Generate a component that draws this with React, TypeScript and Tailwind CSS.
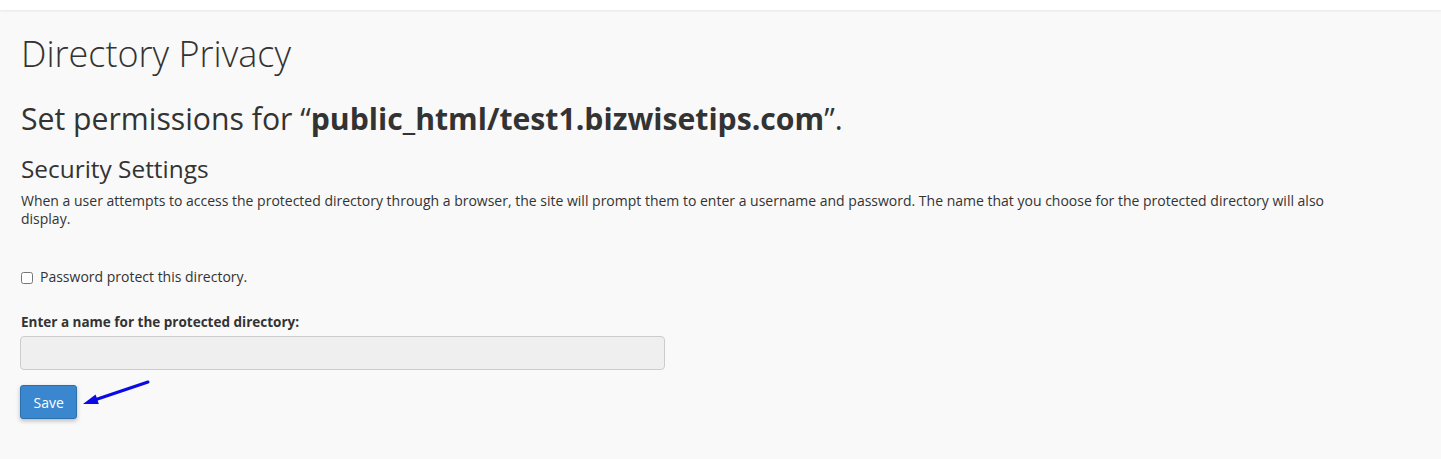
export default function App() {
  return (
    <div
      className="min-h-[459px] bg-[#f9f9f9] text-[#333]"
      style={{ fontFamily: '"Open Sans", sans-serif' }}
    >
      <div className="h-[10px] bg-white shadow-[0_1px_3px_rgba(0,0,0,0.08)]" />
      <div className="px-[21px]">
        <h1 className="mt-[24px] text-[36px] font-light leading-[40px]">Directory Privacy</h1>
        <h2 className="mt-[27px] text-[30.2px] leading-[36px]">
          Set permissions for “<b>public_html/test1.bizwisetips.com</b>”.
        </h2>
        <h3 className="mt-[17px] text-[24.4px] leading-[30px]">Security Settings</h3>
        <p className="mt-[8px] max-w-[1310px] text-[14px] leading-[18px]">
          When a user attempts to access the protected directory through a browser, the site will prompt them to
          enter a username and password. The name that you choose for the protected directory will also display.
        </p>
        <label className="mt-[39px] flex items-start gap-[7px] text-[14px] leading-[20px]">
          <input type="checkbox" className="mt-[5px] h-[12px] w-[12px]" />
          Password protect this directory.
        </label>
        <div className="mt-[26px] text-[13.5px] font-bold leading-[18px]">
          Enter a name for the protected directory:
        </div>
        <input
          type="text"
          disabled
          className="-ml-px mt-[5px] block h-[34px] w-[645px] rounded-[4px] border border-[#ccc] bg-[#efefef]"
        />
        <div className="relative mt-[15px] w-fit">
          <button className="-ml-px h-[34px] rounded-[3px] border border-[#2c6fad] bg-[#3a87d0] px-[12.5px] text-[14px] text-white shadow-[0_2px_4px_rgba(0,0,0,0.25)]">
            Save
          </button>
          <svg className="absolute left-[59px] top-[-9px]" width="80" height="36" viewBox="0 0 80 36">
            <path d="M68 6 L16 23.5" stroke="#0a0ae6" strokeWidth="3" strokeLinecap="round" fill="none" />
            <path d="M3 28 L15.6 18.5 L18.8 27.9 Z" fill="#0a0ae6" />
          </svg>
        </div>
      </div>
    </div>
  )
}
